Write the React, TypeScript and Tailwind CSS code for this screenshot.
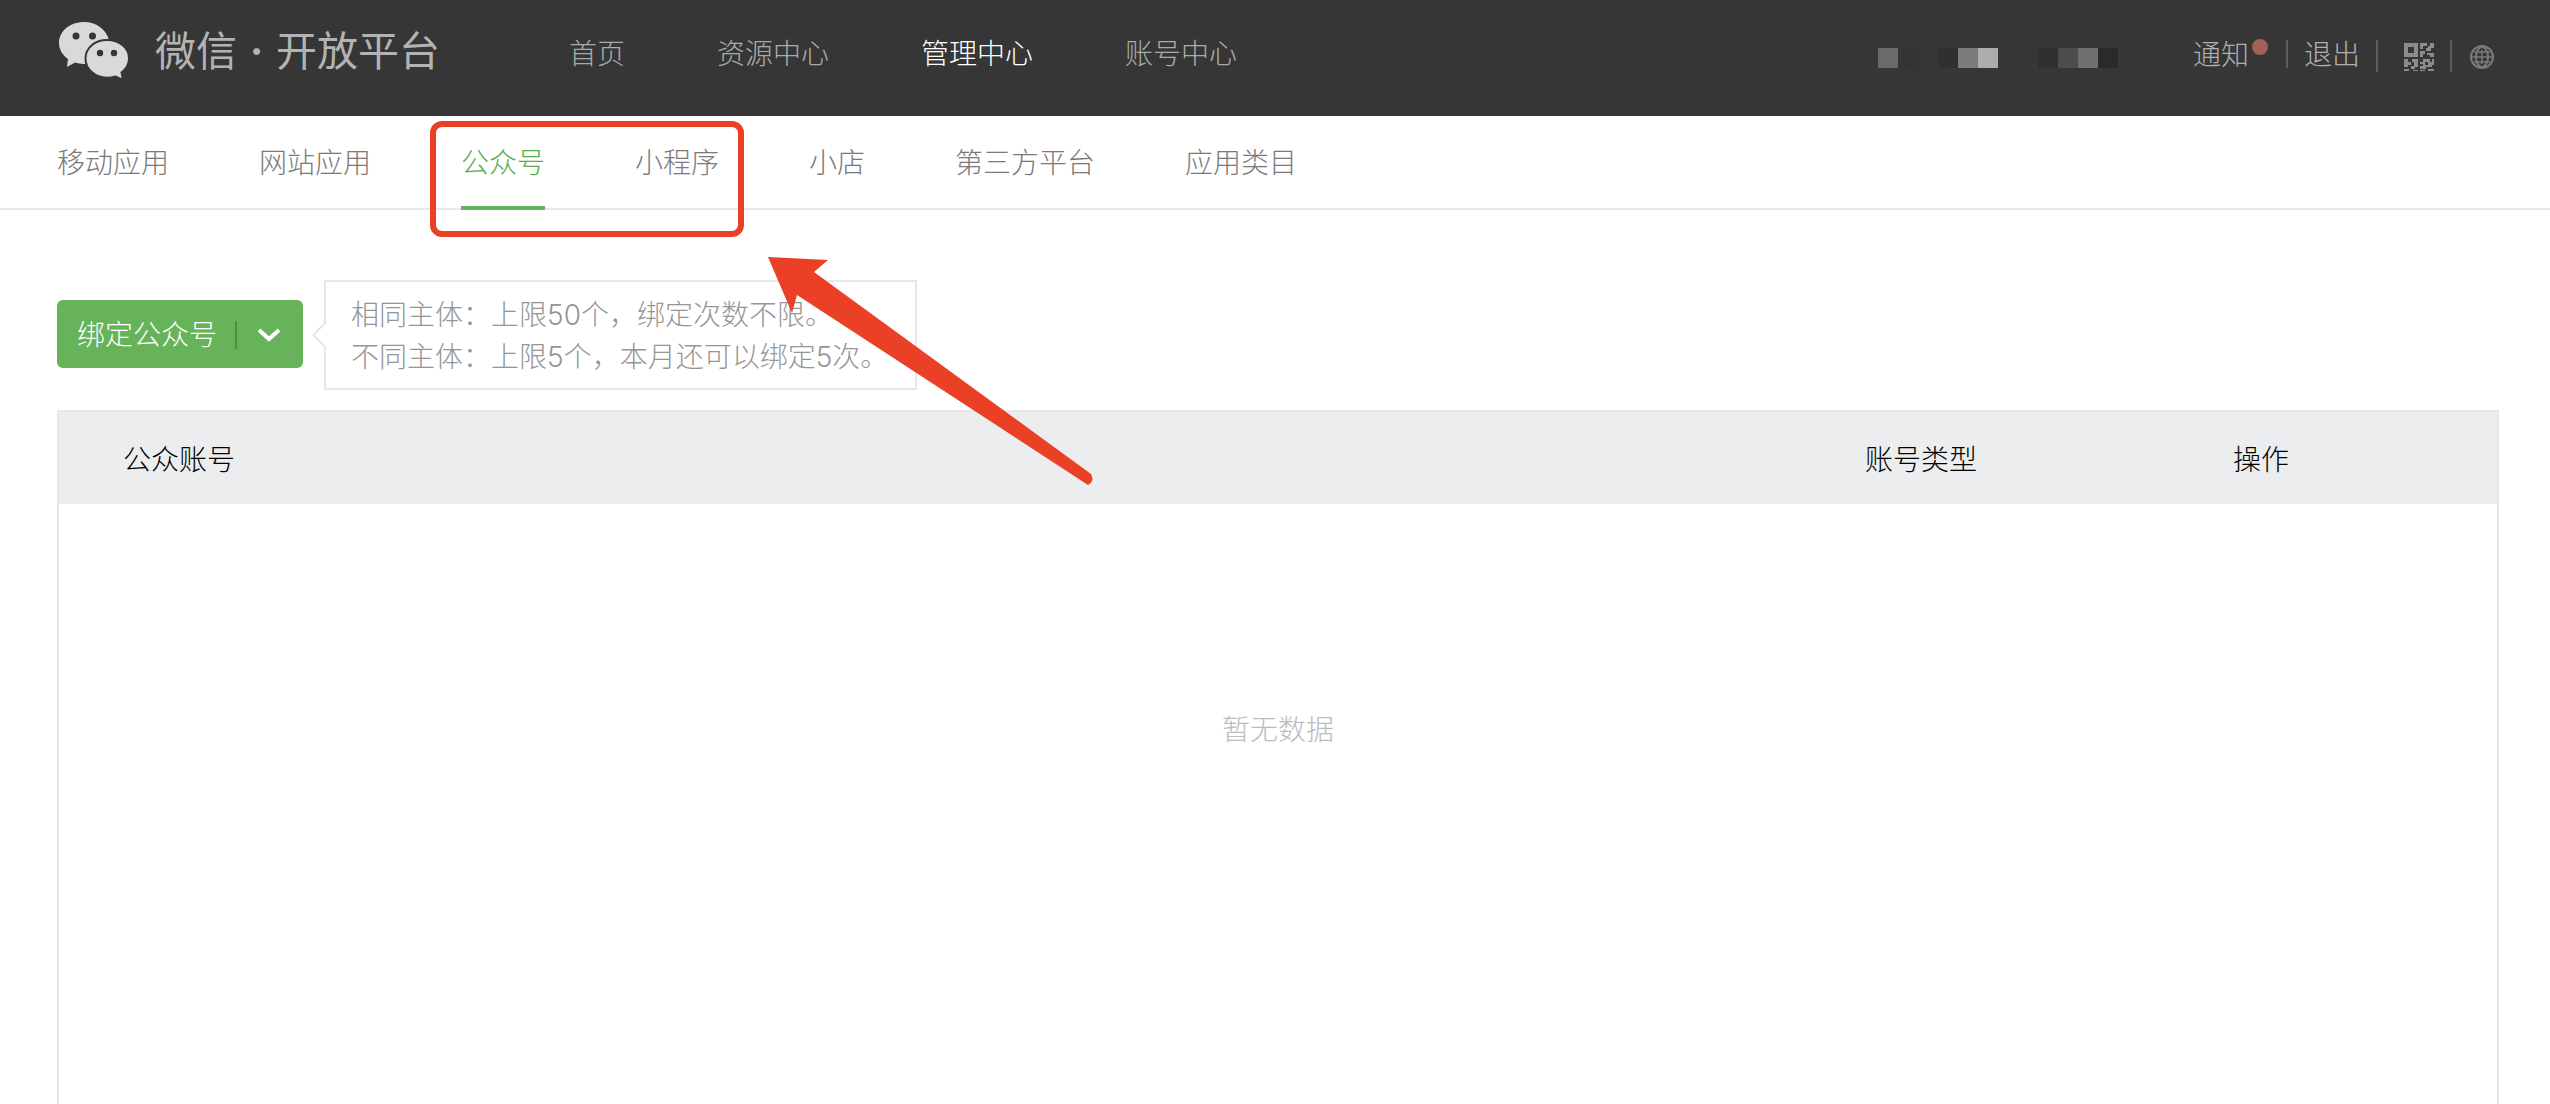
const navItems = [
  { label: "首页", active: false },
  { label: "资源中心", active: false },
  { label: "管理中心", active: true },
  { label: "账号中心", active: false },
];

const tabs = [
  { label: "移动应用", active: false },
  { label: "网站应用", active: false },
  { label: "公众号", active: true },
  { label: "小程序", active: false },
  { label: "小店", active: false },
  { label: "第三方平台", active: false },
  { label: "应用类目", active: false },
];

// masked account name, one colour per mosaic cell
const maskCells = [
  "bg-[#6a6a6a]",
  "bg-[#343434]",
  "bg-[#363636]",
  "bg-[#303030]",
  "bg-[#7c7c7c]",
  "bg-[#adadad]",
  "bg-[#363636]",
  "bg-[#373737]",
  "bg-[#303030]",
  "bg-[#4d4d4d]",
  "bg-[#707070]",
  "bg-[#2a2a2a]",
  "bg-[#373737]",
];

function WechatLogo() {
  return (
    <svg viewBox="0 0 70 58" className="h-[58px] w-[70px]" aria-hidden="true">
      <path
        fill="#d9d9d9"
        d="M25 0C11 0 0 9 0 21c0 6.5 3.5 12 9 16L8 45l8-4.5c4 1.5 8 1.5 12 1.5l5 0L50 18C47 7 37 0 25 0Z"
      />
      <path
        fill="#d9d9d9"
        stroke="#363636"
        strokeWidth="2"
        d="M48 18c12.5 0 22 8 22 18.5c0 6-3 10.5-7.5 14L64 58l-7.5-3.5c-3 .8-5.5 1.2-8.5 1.2c-12 0-21.500-8.500-21.500-19.200S36 18 48 18Z"
      />
      <g fill="#363636">
        <circle cx="17" cy="14" r="3.500" />
        <circle cx="33.500" cy="14" r="3.500" />
        <circle cx="41" cy="31" r="3.200" />
        <circle cx="55" cy="31" r="3.200" />
      </g>
    </svg>
  );
}

function QrIcon() {
  return (
    <svg viewBox="0 0 30 28" className="h-[28px] w-[30px]" fill="#8c8c8c" aria-hidden="true">
      <path fillRule="evenodd" d="M0 0h14v14H0ZM4 4v6h6V4Z" />
      <path d="M16 0h7v3h-4v3h-3ZM26 0h4v5h-3v3h-5V5h2V3h2ZM16 8h5v3h-2v3h-3ZM23 10h7v4h-4v-2h-3Z" />
      <path d="M0 16h4v3h3v3H4v2H0ZM8 16h6v8h-3v2H7v-3h3v-4H8ZM0 26h5v2H0ZM9 27h5v1H9Z" />
      <path fillRule="evenodd" d="M16 19h3v-3h7v3h2v5h-6v2h-6v-3h3v-2h-3ZM21 19v3h3v-3ZM28 16h2v6h-2ZM16 27h5v1h-5ZM24 26h6v2h-6Z" />
    </svg>
  );
}

function GlobeIcon() {
  return (
    <svg viewBox="0 0 24 24" className="size-6" fill="none" stroke="#7a7a7a" strokeWidth="2" aria-hidden="true">
      <circle cx="12" cy="12" r="11" />
      <ellipse cx="12" cy="12" rx="6" ry="10" />
      <path d="M12 5v14M2 12h20M4 7h16M4 17h16" strokeWidth="1.500" />
    </svg>
  );
}

function Header() {
  return (
    <header className="flex h-[116px] items-start bg-[#363636] pr-14 pl-[59px]">
      <a href="#" className="flex w-[510px] items-start gap-[26px] text-[#b3b3b3]">
        <span className="pt-[22px]">
          <WechatLogo />
        </span>
        <span className="flex pt-[21px] text-[41px] leading-[60px] font-normal">
          微信<span className="w-[39px] text-center font-bold">·</span>开放平台
        </span>
      </a>
      <nav className="flex gap-[92px] pt-[33px] leading-[42px]">
        {navItems.map((item) => (
          <a key={item.label} href="#" className={item.active ? "text-white" : "text-[#ababab]"}>
            {item.label}
          </a>
        ))}
      </nav>
      <div className="ml-auto flex pt-8 text-[#b0b0b0]">
        <div className="mt-4 mr-[55px] flex" aria-hidden="true">
          {maskCells.map((color, i) => (
            <span key={i} className={`size-5 ${color}`} />
          ))}
        </div>
        <a href="#" className="relative pt-0.5 leading-[42px]">
          通知
          <span className="absolute top-[7px] left-[59px] size-4 rounded-full bg-[#a36253]" />
        </a>
        <span className="mt-2 mr-4 ml-[37px] h-7 w-0.5 bg-[#5c5c5c]" />
        <a href="#" className="pt-0.5 leading-[42px]">
          退出
        </a>
        <span className="mt-2 mr-[26px] ml-4 h-8 w-0.5 bg-[#5c5c5c]" />
        <button type="button" aria-label="二维码" className="mt-[11px] h-7">
          <QrIcon />
        </button>
        <span className="mt-2 mr-[18px] ml-4 h-8 w-0.5 bg-[#5c5c5c]" />
        <button type="button" aria-label="语言" className="mt-[13px] h-6">
          <GlobeIcon />
        </button>
      </div>
    </header>
  );
}

function Tabs() {
  return (
    <nav className="border-b-2 border-[#e6e6eb] pl-[57px]">
      <div className="-mb-0.5 flex gap-[90px]">
        {tabs.map((tab) => (
          <a
            key={tab.label}
            href="#"
            className={
              tab.active
                ? "h-[94px] border-b-4 border-[#62b35b] pt-[26px] leading-[42px] text-[#56ad4e]"
                : "h-[94px] pt-[26px] leading-[42px] text-[#7a7a7a]"
            }
          >
            {tab.label}
          </a>
        ))}
      </div>
    </nav>
  );
}

function BindBar() {
  return (
    <div className="flex items-start gap-[21px]">
      <button
        type="button"
        className="mt-5 flex h-[68px] items-center rounded-[6px] bg-[#66b359] pt-0.5 pr-[22px] pl-5 text-white"
      >
        绑定公众号
        <span className="mr-5 ml-[18px] h-7 w-0.5 bg-[#4c8f41]" />
        <svg viewBox="0 0 24 16" className="h-4 w-6" fill="none" stroke="#fff" strokeWidth="4" aria-hidden="true">
          <path d="M2 3 12 12 22 3" />
        </svg>
      </button>
      <div className="relative flex h-[110px] items-center border-2 border-[#e6e6eb] pt-0.5 pr-[27px] pl-[25px] leading-[42px] text-[#969696]">
        <svg viewBox="0 0 14 26" className="absolute top-[40px] -left-[14px] h-[26px] w-[14px]" aria-hidden="true">
          <path d="M14 0 1.500 13 14 26" fill="#fff" stroke="#e6e6eb" strokeWidth="2" />
        </svg>
        <p>
          相同主体：上限50个，绑定次数不限。
          <br />
          不同主体：上限5个，本月还可以绑定5次。
        </p>
      </div>
    </div>
  );
}

function AccountTable() {
  return (
    <div className="mt-5 flex-1 border-2 border-b-0 border-[#e6e6eb]">
      <table className="w-full table-fixed">
        <colgroup>
          <col />
          <col className="w-[368px]" />
          <col className="w-[328px]" />
        </colgroup>
        <thead>
          <tr className="h-[92px] bg-[#ecedef] text-left text-black">
            <th className="pt-[3px] pl-16 font-light">公众账号</th>
            <th className="pt-[3px] pl-16 font-light">账号类型</th>
            <th className="pt-[3px] pl-16 font-light">操作</th>
          </tr>
        </thead>
        <tbody>
          <tr>
            <td colSpan={3} className="h-[450px] pt-0.5 text-center text-[#bcbcbc]">
              暂无数据
            </td>
          </tr>
        </tbody>
      </table>
    </div>
  );
}

/** Red frame and arrow laid over the page, pointing at the two tabs. */
function Callout() {
  return (
    <div className="pointer-events-none" aria-hidden="true">
      <div className="absolute top-[121px] left-[430px] h-[116px] w-[314px] rounded-[12px] border-[6px] border-[#ea4025]" />
      <svg viewBox="0 0 326 230" className="absolute top-[257px] left-[768px] h-[230px] w-[326px]" fill="#ea4025">
        <path d="M0 0 60 3 46 15 323 217Q327 224 320 228L29 38 24 56Z" />
      </svg>
    </div>
  );
}

export default function App() {
  return (
    <div className="relative flex min-h-screen flex-col bg-white font-['Inter','Noto_Sans_CJK_SC',sans-serif] text-[28px] font-light">
      <Header />
      <Tabs />
      <main className="flex flex-1 flex-col pt-[70px] pr-[51px] pl-[57px]">
        <BindBar />
        <AccountTable />
      </main>
      <Callout />
    </div>
  );
}
